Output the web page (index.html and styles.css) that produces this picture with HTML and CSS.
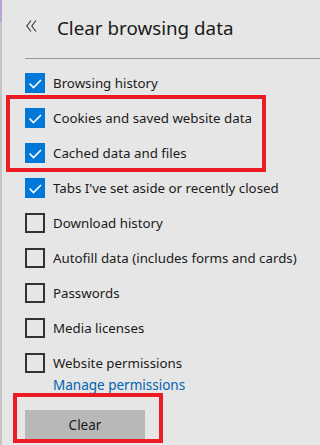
FILE: index.html
```html
<!DOCTYPE html>
<html>
<head>
<meta charset="utf-8">
<link rel="stylesheet" href="styles.css">
</head>
<body>
<div class="pane">
  <div class="header">
    <span class="back"><svg viewBox="0 0 11 12"><polyline points="5,0.5 0.8,6 5,11.5"/><polyline points="10,0.5 5.8,6 10,11.5"/></svg></span>
    <h1 class="title">Clear browsing data</h1>
  </div>
  <div class="divider"></div>
  <ul class="list">
    <li class="row"><span class="box checked"><svg viewBox="0 0 20 20"><polyline points="4.5,10.5 8.5,14.5 16,7"/></svg></span><span class="label">Browsing history</span></li>
    <li class="row"><span class="box checked"><svg viewBox="0 0 20 20"><polyline points="4.5,10.5 8.5,14.5 16,7"/></svg></span><span class="label">Cookies and saved website data</span></li>
    <li class="row"><span class="box checked"><svg viewBox="0 0 20 20"><polyline points="4.5,10.5 8.5,14.5 16,7"/></svg></span><span class="label">Cached data and files</span></li>
    <li class="row"><span class="box checked"><svg viewBox="0 0 20 20"><polyline points="4.5,10.5 8.5,14.5 16,7"/></svg></span><span class="label">Tabs I've set aside or recently closed</span></li>
    <li class="row"><span class="box"></span><span class="label">Download history</span></li>
    <li class="row"><span class="box"></span><span class="label">Autofill data (includes forms and cards)</span></li>
    <li class="row"><span class="box"></span><span class="label">Passwords</span></li>
    <li class="row"><span class="box"></span><span class="label">Media licenses</span></li>
    <li class="row"><span class="box"></span><span class="label">Website permissions</span></li>
  </ul>
  <a class="manage" href="#">Manage permissions</a>
  <div class="actions">
    <button class="clear">Clear</button>
  </div>
  <div class="mark mark-items"></div>
  <div class="mark mark-clear"></div>
</div>
</body>
</html>
```

FILE: styles.css
```css
html, body {
  margin: 0;
  padding: 0;
  height: 100%;
  background: #e6e6e6;
  font-family: "Noto Sans", "Open Sans", "Liberation Sans", sans-serif;
  color: #1a1a1a;
  overflow: hidden;
}

.pane {
  position: relative;
  height: 445px;
  box-sizing: border-box;
  border-left: 2px solid #c4c4c4;
  background: #e6e6e6;
}

.pane::before {
  content: "";
  position: absolute;
  left: -2px;
  top: 0;
  width: 2px;
  height: 22px;
  background: #b9a4d4;
}

.header {
  display: flex;
  align-items: center;
  height: 58px;
  padding-left: 24px;
  box-sizing: border-box;
  padding-bottom: 2px;
}

.back {
  width: 31px;
  height: 12px;
  display: flex;
  margin-top: -5px;
}

.back svg {
  width: 11px;
  height: 12px;
}

.back polyline {
  fill: none;
  stroke: #333;
  stroke-width: 1.1;
}

.title {
  margin: 0;
  font-size: 18.8px;
  font-weight: 400;
  color: #1a1a1a;
}

.divider {
  margin-left: 23px;
  height: 1px;
  background: #9a9a9a;
}

.list {
  list-style: none;
  margin: 0;
  padding: 14px 0 0 23px;
  display: flex;
  flex-direction: column;
  gap: 15px;
}

.row {
  display: flex;
  align-items: center;
  height: 20px;
}

.box {
  width: 20px;
  height: 20px;
  box-sizing: border-box;
  border: 2px solid #333;
  margin-right: 8px;
  flex: none;
  display: flex;
}

.box.checked {
  background: #0078d7;
  border: none;
}

.box svg {
  width: 20px;
  height: 20px;
}

.box polyline {
  fill: none;
  stroke: #fff;
  stroke-width: 1.6;
}

.label {
  font-size: 13.3px;
  color: #1a1a1a;
  white-space: nowrap;
}

.manage {
  display: block;
  margin: 2px 0 0 51px;
  font-size: 13.5px;
  color: #0063b1;
  text-decoration: none;
  line-height: 20px;
}

.actions {
  padding: 15px 0 0 23px;
}

.clear {
  width: 120px;
  height: 32px;
  border: none;
  background: #b8b8b8;
  font-family: inherit;
  font-size: 13.5px;
  color: #1a1a1a;
  padding: 0 0 2px;
}

.mark {
  position: absolute;
  border: 4.5px solid #ed1c24;
  box-sizing: border-box;
}

.mark-items {
  left: 4px;
  top: 95px;
  width: 260px;
  height: 77px;
}

.mark-clear {
  left: 11px;
  top: 393px;
  width: 150px;
  height: 50px;
}
```
